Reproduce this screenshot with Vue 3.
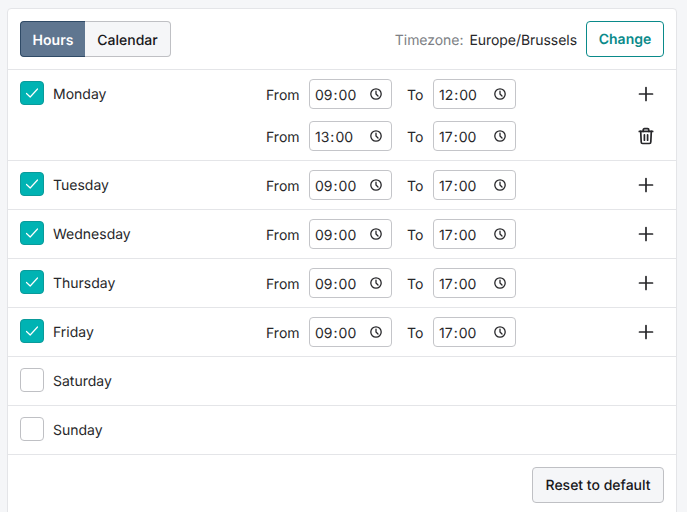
<script setup>
import { ref } from 'vue'

const tab = ref('hours')

const days = ref([
  { name: 'Monday', on: true, ranges: [{ from: '09:00', to: '12:00' }, { from: '13:00', to: '17:00' }] },
  { name: 'Tuesday', on: true, ranges: [{ from: '09:00', to: '17:00' }] },
  { name: 'Wednesday', on: true, ranges: [{ from: '09:00', to: '17:00' }] },
  { name: 'Thursday', on: true, ranges: [{ from: '09:00', to: '17:00' }] },
  { name: 'Friday', on: true, ranges: [{ from: '09:00', to: '17:00' }] },
  { name: 'Saturday', on: false, ranges: [] },
  { name: 'Sunday', on: false, ranges: [] },
])
</script>

<template>
  <div class="page">
    <div class="card">
      <header class="top">
        <div class="tabs">
          <button class="tab" :class="{ active: tab === 'hours' }" @click="tab = 'hours'">Hours</button>
          <button class="tab" :class="{ active: tab === 'calendar' }" @click="tab = 'calendar'">Calendar</button>
        </div>
        <div class="tz">
          <span class="tz-label">Timezone:</span>
          <span class="tz-value">Europe/Brussels</span>
          <button class="change">Change</button>
        </div>
      </header>

      <div v-for="day in days" :key="day.name" class="day">
        <label class="day-name">
          <span class="check" :class="{ on: day.on }" @click.prevent="day.on = !day.on">
            <svg v-if="day.on" width="16" height="16" viewBox="0 0 16 16" fill="none">
              <path d="M2.5 8.5l3.7 3.5 7.3-8" stroke="#fff" stroke-width="1.2" stroke-linecap="round" stroke-linejoin="round" />
            </svg>
          </span>
          {{ day.name }}
        </label>
        <div v-if="day.on" class="ranges">
          <div v-for="(r, i) in day.ranges" :key="i" class="range">
            <span class="from-label">From</span>
            <div class="time">
              <span class="digits"><i>{{ r.from.split(':')[0] }}</i>:<i>{{ r.from.split(':')[1] }}</i></span>
              <svg class="clock" width="14" height="14" viewBox="0 0 14 14" fill="none">
                <circle cx="7" cy="7" r="5.2" stroke="#27272a" stroke-width="1.3" />
                <path d="M7 4.2V7l2 2" stroke="#27272a" stroke-width="1.3" stroke-linecap="round" stroke-linejoin="round" />
              </svg>
            </div>
            <span class="to-label">To</span>
            <div class="time">
              <span class="digits"><i>{{ r.to.split(':')[0] }}</i>:<i>{{ r.to.split(':')[1] }}</i></span>
              <svg class="clock" width="14" height="14" viewBox="0 0 14 14" fill="none">
                <circle cx="7" cy="7" r="5.2" stroke="#27272a" stroke-width="1.3" />
                <path d="M7 4.2V7l2 2" stroke="#27272a" stroke-width="1.3" stroke-linecap="round" stroke-linejoin="round" />
              </svg>
            </div>
            <button class="icon-btn">
              <svg v-if="i === 0" width="18" height="18" viewBox="0 0 18 18" fill="none">
                <path d="M9 2.5v13M2.5 9h13" stroke="#27272a" stroke-width="1.7" stroke-linecap="round" />
              </svg>
              <svg v-else width="18" height="18" viewBox="0 0 18 18" fill="none" stroke="#27272a" stroke-width="1.7" stroke-linecap="round" stroke-linejoin="round">
                <path d="M2.3 4.4h13.4" />
                <path d="M6.2 4.4V2.9c0-.7.5-1.2 1.2-1.2h3.2c.7 0 1.2.5 1.2 1.2v1.5" />
                <path d="M3.7 4.4l.5 10.7c0 .8.6 1.4 1.4 1.4h6.8c.8 0 1.4-.6 1.4-1.4l.5-10.7" />
                <path d="M7.4 7.8v5.4M10.6 7.8v5.4" />
              </svg>
            </button>
          </div>
        </div>
      </div>

      <footer class="bottom">
        <button class="reset">Reset to default</button>
      </footer>
    </div>
  </div>
</template>

<style>
html,
body {
  margin: 0;
  background: #f5f6f8;
}
</style>

<style scoped>
.page {
  height: 512px;
  overflow: hidden;
  padding: 8px 10px 0 7px;
  box-sizing: border-box;
  font-family: Inter, sans-serif;
  font-size: 14px;
  color: #27272a;
  text-rendering: geometricPrecision;
}

.card {
  background: #fff;
  border: 1px solid #e4e5e8;
  border-radius: 4px;
}

button {
  font-family: inherit;
  font-size: 14px;
  cursor: pointer;
  box-sizing: border-box;
  text-rendering: geometricPrecision;
}

.top {
  display: flex;
  justify-content: space-between;
  align-items: center;
  height: 60px;
  padding: 0 12px;
  border-bottom: 1px solid #e4e5e8;
}

.tabs {
  display: flex;
}

.tab {
  width: 86px;
  height: 36px;
  padding: 2px 0 0;
  font-weight: 500;
  color: #18181b;
  background: #f5f6f8;
  border: 1px solid #bfc0c4;
  border-left: none;
  border-radius: 0 4px 4px 0;
}

.tab.active {
  width: 65px;
  color: #fff;
  background: #5f7690;
  border: 1px solid #2f4a66;
  border-right: none;
  border-radius: 4px 0 0 4px;
  font-weight: 600;
}

.tz {
  display: flex;
  align-items: center;
}

.tz-label {
  padding-top: 2px;
  color: #7d7f85;
  margin-right: 6px;
  letter-spacing: -0.05px;
}

.tz-value {
  padding-top: 2px;
  margin-right: 9px;
  letter-spacing: -0.05px;
}

.change {
  width: 78px;
  height: 36px;
  padding-top: 2px;
  color: #0a8a8a;
  font-weight: 600;
  background: #fff;
  border: 1px solid #0a8a8a;
  border-radius: 4px;
}

.day {
  display: flex;
  padding: 9px 12px;
  min-height: 30px;
  border-bottom: 1px solid #e4e5e8;
}

.day-name {
  display: flex;
  align-items: center;
  gap: 9px;
  width: 246px;
  height: 30px;
  flex-shrink: 0;
}

.check {
  display: flex;
  align-items: center;
  justify-content: center;
  width: 24px;
  height: 24px;
  margin-bottom: 2px;
  box-sizing: border-box;
  background: #fff;
  border: 1px solid #bfc0c4;
  border-radius: 4px;
}

.check.on {
  background: #00b3b3;
  border-color: #0a9a9a;
}

.ranges {
  display: flex;
  flex-direction: column;
  gap: 12px;
  flex: 1;
}

.range {
  display: flex;
  align-items: center;
  height: 30px;
}

.from-label {
  width: 43px;
  padding-top: 2px;
}

.to-label {
  width: 26px;
  margin-left: 15px;
  padding-top: 2px;
}

.time {
  display: flex;
  align-items: center;
  justify-content: space-between;
  width: 83px;
  height: 30px;
  box-sizing: border-box;
  padding: 0 8px 0 4px;
  border: 1px solid #c4c5c9;
  border-radius: 4px;
}

.digits {
  padding-top: 2px;
}

.digits i {
  font-style: normal;
  padding: 0 1px;
}

.clock {
  display: block;
}

.icon-btn {
  display: flex;
  align-items: center;
  justify-content: center;
  width: 18px;
  height: 18px;
  margin-left: 121px;
  padding: 0;
  background: none;
  border: none;
}

.bottom {
  display: flex;
  justify-content: flex-end;
  padding: 12px;
}

.reset {
  width: 132px;
  height: 36px;
  padding-top: 2px;
  color: #18181b;
  font-weight: 500;
  background: #f5f6f8;
  border: 1px solid #bfc0c4;
  border-radius: 4px;
}
</style>
